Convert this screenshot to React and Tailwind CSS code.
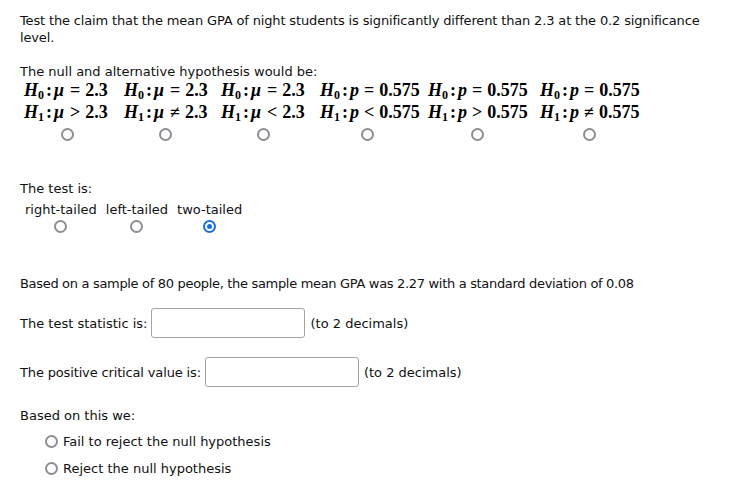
import React from 'react';

const Radio = ({ checked = false, className = '' }) => (
  <span
    className={`inline-flex items-center justify-center w-[13px] h-[13px] rounded-full border-2 bg-white ${
      checked ? 'border-[#1a6fe0]' : 'border-[#8d8d94]'
    } ${className}`}
  >
    {checked && <span className="w-[5px] h-[5px] rounded-full bg-[#1a6fe0]" />}
  </span>
);

const Sub = ({ n }) => <span className="text-[12px] not-italic relative top-[3px]">{n}</span>;

const Hyp = ({ h, v, op, val }) => (
  <div className="whitespace-nowrap leading-[20px]">
    <i>H</i>
    <Sub n={h} />
    <span className="mx-[2px]">:</span>
    <i className={v === 'μ' ? 'mr-[1px]' : ''}>{v}</i>
    <span className="mx-[5px]">{op}</span>
    {val}
  </div>
);

// widths follow the columns of the rendered table
const hyps = [
  { v: 'μ', op: '>', val: '2.3', w: 'w-[86px]' },
  { v: 'μ', op: '≠', val: '2.3', w: 'w-[83px]' },
  { v: 'μ', op: '<', val: '2.3', w: 'w-[85px]' },
  { v: 'p', op: '<', val: '0.575', w: 'w-[94px]' },
  { v: 'p', op: '>', val: '0.575', w: 'w-[98px]' },
  { v: 'p', op: '≠', val: '0.575', w: 'w-[98px]' },
];

const App = () => {
  return (
    <div className="min-h-screen bg-white text-[#111] text-[13px] leading-[17px] px-5 pt-[12px] font-['DejaVu_Sans',sans-serif]">
      <p className="tracking-[-0.15px]">
        Test the claim that the mean GPA of night students is significantly different than 2.3 at the 0.2 significance
        level.
      </p>

      <p className="mt-[17px]">The null and alternative hypothesis would be:</p>
      <div className="flex gap-[14px] ml-[4px] font-['Liberation_Serif',serif] font-bold text-[18px] text-black">
        {hyps.map((hp, i) => (
          <div key={i} className={`flex flex-col items-center ${hp.w}`}>
            <div className="self-start">
              <Hyp h="0" v={hp.v} op="=" val={hp.val} />
              <Hyp h="1" v={hp.v} op={hp.op} val={hp.val} />
            </div>
            <Radio className="mt-[4px]" />
          </div>
        ))}
      </div>

      <p className="mt-[39px]">The test is:</p>
      <div className="flex gap-[9px] ml-[5px] mt-[4px]">
        {['right-tailed', 'left-tailed', 'two-tailed'].map((t, i) => (
          <div key={t} className="flex flex-col items-center">
            <span>{t}</span>
            <Radio checked={i === 2} className="mt-[2px]" />
          </div>
        ))}
      </div>

      <p className="mt-[42px] tracking-[-0.32px]">
        Based on a sample of 80 people, the sample mean GPA was 2.27 with a standard deviation of 0.08
      </p>

      <div className="flex items-center mt-[16px]">
        <span>The test statistic is:</span>
        <input className="ml-[4px] w-[154px] h-[30px] border border-[#a3a3a3] rounded-[3px] bg-white" />
        <span className="ml-[5px]">(to 2 decimals)</span>
      </div>

      <div className="flex items-center mt-[19px]">
        <span className="tracking-[-0.15px]">The positive critical value is:</span>
        <input className="ml-[4px] w-[154px] h-[30px] border border-[#a3a3a3] rounded-[3px] bg-white" />
        <span className="ml-[5px]">(to 2 decimals)</span>
      </div>

      <p className="mt-[20px]">Based on this we:</p>
      <div className="ml-[25px] mt-[9px] flex flex-col gap-[10px]">
        <label className="flex items-center gap-[5px]">
          <Radio />
          <span>Fail to reject the null hypothesis</span>
        </label>
        <label className="flex items-center gap-[5px]">
          <Radio />
          <span>Reject the null hypothesis</span>
        </label>
      </div>
    </div>
  );
};

export default App;
